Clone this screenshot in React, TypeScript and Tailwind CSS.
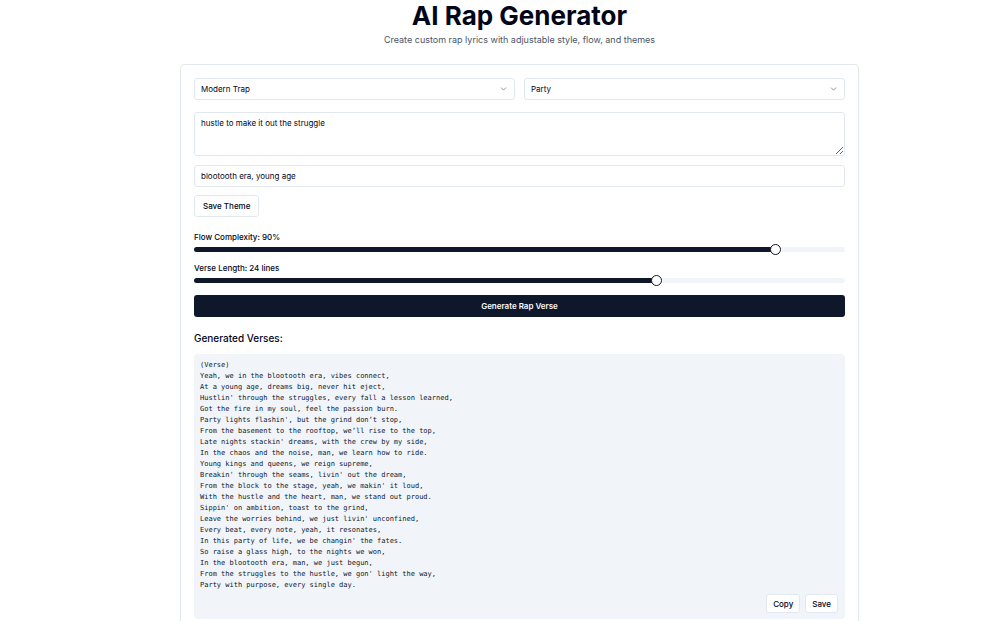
import { useState, type CSSProperties } from "react";
import { ChevronDown } from "lucide-react";

const verse = `(Verse)
Yeah, we in the blootooth era, vibes connect,
At a young age, dreams big, never hit eject,
Hustlin' through the struggles, every fall a lesson learned,
Got the fire in my soul, feel the passion burn.
Party lights flashin', but the grind don’t stop,
From the basement to the rooftop, we’ll rise to the top,
Late nights stackin' dreams, with the crew by my side,
In the chaos and the noise, man, we learn how to ride.
Young kings and queens, we reign supreme,
Breakin' through the seams, livin' out the dream,
From the block to the stage, yeah, we makin' it loud,
With the hustle and the heart, man, we stand out proud.
Sippin' on ambition, toast to the grind,
Leave the worries behind, we just livin' unconfined,
Every beat, every note, yeah, it resonates,
In this party of life, we be changin' the fates.
So raise a glass high, to the nights we won,
In the blootooth era, man, we just begun,
From the struggles to the hustle, we gon' light the way,
Party with purpose, every single day.`;

const field =
  "block w-full rounded-[3px] border border-slate-200 bg-white px-[6px] text-[8px] leading-3 text-slate-950 outline-none";
const outlineButton =
  "rounded-[3px] border border-slate-200 bg-white text-[8px] leading-3 font-medium text-slate-950";

function Dropdown({ label, options }: { label: string; options: string[] }) {
  return (
    <div className="relative">
      <select aria-label={label} className={`${field} h-[22px] appearance-none`}>
        {options.map((option) => (
          <option key={option}>{option}</option>
        ))}
      </select>
      <ChevronDown
        className="pointer-events-none absolute top-1/2 right-[7px] -translate-y-1/2 text-slate-500"
        size={9}
      />
    </div>
  );
}

type SliderProps = {
  id: string;
  label: string;
  min: number;
  max: number;
  step: number;
  value: number;
  onChange: (value: number) => void;
};

function Slider({ id, label, min, max, step, value, onChange }: SliderProps) {
  const fill = { "--fill": `${((value - min) / (max - min)) * 100}%` } as CSSProperties;
  return (
    <div className="flex flex-col gap-px">
      <label htmlFor={id} className="text-[8px] leading-3 font-medium">
        {label}
      </label>
      <input
        id={id}
        type="range"
        min={min}
        max={max}
        step={step}
        value={value}
        onChange={(e) => onChange(Number(e.target.value))}
        style={fill}
        className="block h-[11px] w-full appearance-none bg-transparent [&::-webkit-slider-runnable-track]:h-[5px] [&::-webkit-slider-runnable-track]:rounded-full [&::-webkit-slider-runnable-track]:bg-[linear-gradient(to_right,#0f172a_var(--fill),#f1f5f9_var(--fill))] [&::-webkit-slider-thumb]:-mt-[3px] [&::-webkit-slider-thumb]:size-[11px] [&::-webkit-slider-thumb]:appearance-none [&::-webkit-slider-thumb]:rounded-full [&::-webkit-slider-thumb]:border [&::-webkit-slider-thumb]:border-slate-900 [&::-webkit-slider-thumb]:bg-white"
      />
    </div>
  );
}

export default function App() {
  const [flow, setFlow] = useState(90);
  const [lines, setLines] = useState(24);

  return (
    <div className="bg-white pl-[54px] font-['Inter','Liberation_Sans',sans-serif] text-slate-950">
      <main className="mx-auto max-w-[679px] pb-4">
        <header className="pb-[18px] text-center">
          <h1 className="text-[26px] leading-8 font-bold">AI Rap Generator</h1>
          <p className="mt-[2px] text-[9px] leading-3 text-gray-600">
            Create custom rap lyrics with adjustable style, flow, and themes
          </p>
        </header>

        <section className="rounded-[4px] border border-slate-200 p-[13px]">
          <div className="grid grid-cols-2 gap-[9px]">
            <Dropdown label="Style" options={["Modern Trap", "Old School", "Boom Bap"]} />
            <Dropdown label="Mood" options={["Party", "Struggle", "Love"]} />
          </div>

          <textarea
            aria-label="Theme"
            defaultValue="hustle to make it out the struggle"
            className={`${field} mt-3 h-11 resize-y py-1`}
          />
          <input
            type="text"
            aria-label="Keywords"
            defaultValue="blootooth era, young age"
            className={`${field} mt-[9px] h-[22px]`}
          />
          <button type="button" className={`${outlineButton} mt-2 block h-[22px] px-2`}>
            Save Theme
          </button>

          <div className="mt-[14px] flex flex-col gap-[7px]">
            <Slider
              id="flow"
              label={`Flow Complexity: ${flow}%`}
              min={0}
              max={100}
              step={1}
              value={flow}
              onChange={setFlow}
            />
            <Slider
              id="length"
              label={`Verse Length: ${lines} lines`}
              min={4}
              max={32}
              step={4}
              value={lines}
              onChange={setLines}
            />
          </div>

          <button
            type="button"
            className="mt-[9px] block h-[22px] w-full rounded-[3px] bg-slate-900 text-[8px] leading-3 font-semibold text-slate-50"
          >
            Generate Rap Verse
          </button>

          <h2 className="mt-[14px] text-[10px] leading-[14px] font-medium">Generated Verses:</h2>

          <div className="mt-[9px] rounded-[4px] bg-slate-100 py-[6px] pr-[7px] pl-[6px]">
            <pre className="font-['DejaVu_Sans_Mono','Liberation_Mono',monospace] text-[7px] leading-[11px] whitespace-pre-wrap text-slate-900">
              {verse}
            </pre>
            <div className="mt-[3px] flex justify-end gap-[5px]">
              <button type="button" className={`${outlineButton} h-[19px] px-[6px]`}>
                Copy
              </button>
              <button type="button" className={`${outlineButton} h-[19px] px-[6px]`}>
                Save
              </button>
            </div>
          </div>
        </section>
      </main>
    </div>
  );
}
